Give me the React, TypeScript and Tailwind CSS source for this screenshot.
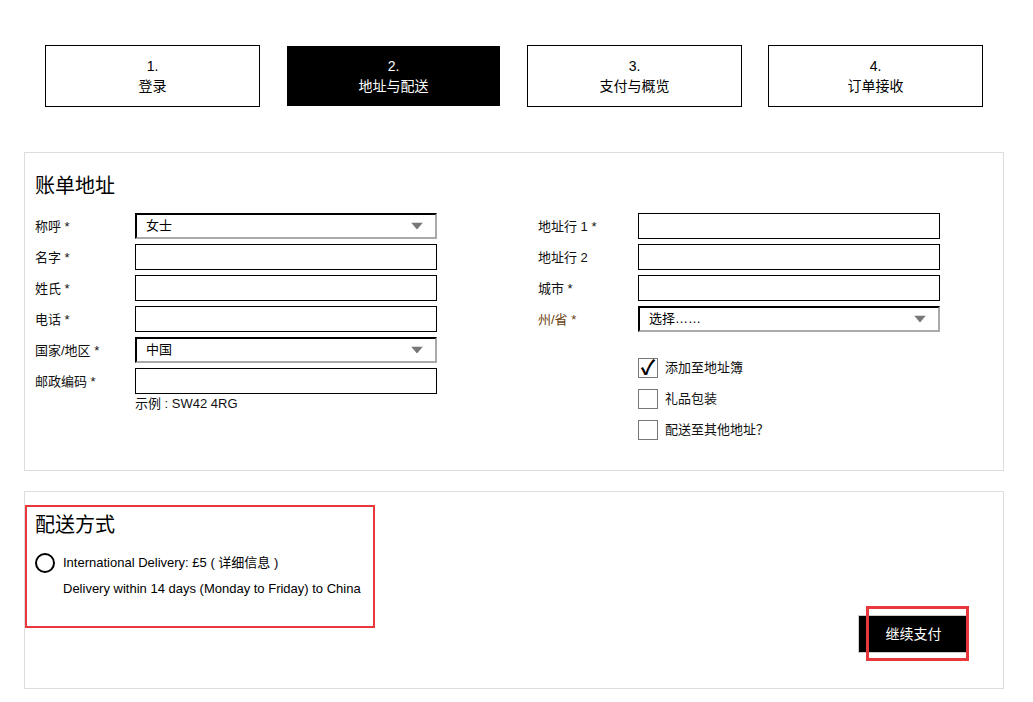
import React from 'react';

const font = "font-['Liberation_Sans','Noto_Sans_CJK_SC',sans-serif]";

const steps = [
  { n: '1.', label: '登录' },
  { n: '2.', label: '地址与配送', active: true },
  { n: '3.', label: '支付与概览' },
  { n: '4.', label: '订单接收' },
];

const Arrow = () => (
  <svg width="12" height="7" viewBox="0 0 12 7" className="absolute right-[12px] top-1/2 -translate-y-1/2">
    <path d="M0 0h12L6 7z" fill="#777" />
  </svg>
);

const Select: React.FC<{ value: string }> = ({ value }) => (
  <div className="relative w-[302px] h-[26px] border-2 border-t-black border-l-black border-r-[#aaa] border-b-[#aaa] flex items-center pl-[9px] text-[13px] text-black">
    {value}
    <Arrow />
  </div>
);

const Input = () => <div className="w-[302px] h-[26px] border border-black bg-white" />;

const Row: React.FC<{ label: string; labelClass?: string; children: React.ReactNode }> = ({ label, labelClass, children }) => (
  <div className="flex items-center h-[26px]">
    <div className={`w-[100px] text-[13px] leading-none ${labelClass ?? 'text-[#111]'}`}>{label}</div>
    {children}
  </div>
);

const Checkbox: React.FC<{ label: string; checked?: boolean }> = ({ label, checked }) => (
  <div className="flex items-center h-[21px]">
    <div className="w-[20px] h-[20px] border border-[#777] flex items-center justify-center text-[20px] leading-none text-black font-bold">
      {checked ? '✓' : ''}
    </div>
    <span className="ml-[7px] text-[13px] text-[#111]">{label}</span>
  </div>
);

export default function App() {
  return (
    <div className={`${font} bg-white w-[1033px] h-[702px] overflow-hidden`}>
      <div className="flex gap-[26px] pl-[45px] pt-[45px]">
        {steps.map((s) => (
          <div
            key={s.n}
            className={`w-[215px] h-[62px] flex flex-col items-center justify-center text-[14px] leading-[20px] border ${
              s.active ? 'bg-black text-white border-white' : 'border-black text-black'
            }`}
          >
            <div>{s.n}</div>
            <div>{s.label}</div>
          </div>
        ))}
      </div>

      <div className="ml-[24px] mt-[45px] w-[980px] border border-[#ddd] pl-[10px] pt-[19px] pb-[30px]">
        <h2 className="text-[20px] leading-[28px] text-black">账单地址</h2>
        <div className="mt-[13px] flex">
          <div className="w-[503px] flex flex-col gap-[5px]">
            <Row label="称呼 *"><Select value="女士" /></Row>
            <Row label="名字 *"><Input /></Row>
            <Row label="姓氏 *"><Input /></Row>
            <Row label="电话 *"><Input /></Row>
            <Row label="国家/地区 *"><Select value="中国" /></Row>
            <Row label="邮政编码 *"><Input /></Row>
            <div className="pl-[100px] -mt-[3px] text-[13px] leading-[16px] text-[#111]">示例 : SW42 4RG</div>
          </div>
          <div className="flex flex-col gap-[5px]">
            <Row label="地址行 1 *"><Input /></Row>
            <Row label="地址行 2"><Input /></Row>
            <Row label="城市 *"><Input /></Row>
            <Row label="州/省 *" labelClass="text-[#6b4210]"><Select value="选择……" /></Row>
            <div className="pl-[100px] mt-[20px] flex flex-col gap-[10px]">
              <Checkbox label="添加至地址簿" checked />
              <Checkbox label="礼品包装" />
              <Checkbox label="配送至其他地址？" />
            </div>
          </div>
        </div>
      </div>

      <div className="ml-[24px] mt-[20px] w-[980px] border border-[#ddd] pt-[13px] pb-[35px] pr-[34px] flex justify-between">
        <div className="w-[350px] border-2 border-[#e8383d] pl-[8px] pt-[4px] pb-[28px] mb-[25px] self-start">
          <h2 className="text-[20px] leading-[28px] text-black">配送方式</h2>
          <div className="mt-[14px] flex items-center">
            <div className="w-[20px] h-[20px] rounded-full border-2 border-black" />
            <span className="ml-[8px] text-[13px] text-black">International Delivery: £5 ( 详细信息 )</span>
          </div>
          <div className="pl-[28px] mt-[7px] text-[13px] leading-[18px] text-black">
            Delivery within 14 days (Monday to Friday) to China
          </div>
        </div>
        <div className="relative self-end">
          <button className="w-[111px] h-[38px] bg-black border border-[#ccc] text-white text-[14px]">继续支付</button>
          <div className="absolute left-[8px] -top-[9px] w-[103px] h-[55px] border-[3px] border-[#e8383d] pointer-events-none" />
        </div>
      </div>
    </div>
  );
}
